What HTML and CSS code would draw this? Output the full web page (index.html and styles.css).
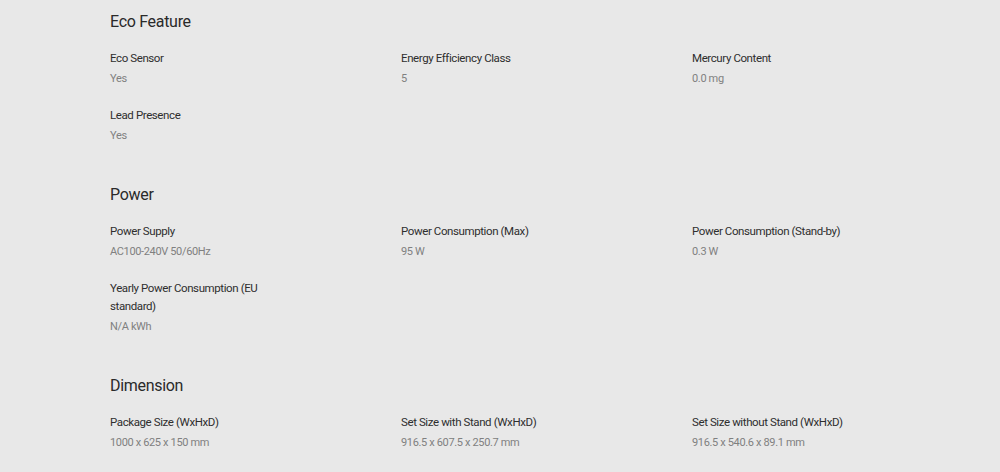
FILE: index.html
```html
<!DOCTYPE html>
<html lang="en">
<head>
<meta charset="utf-8">
<title>Specs</title>
<link rel="stylesheet" href="styles.css">
</head>
<body>
<main class="specs">
  <section class="group">
    <h2 class="group-title">Eco Feature</h2>
    <div class="grid">
      <div class="item"><div class="label">Eco Sensor</div><div class="value">Yes</div></div>
      <div class="item"><div class="label">Energy Efficiency Class</div><div class="value">5</div></div>
      <div class="item"><div class="label">Mercury Content</div><div class="value">0.0 mg</div></div>
      <div class="item"><div class="label">Lead Presence</div><div class="value">Yes</div></div>
    </div>
  </section>
  <section class="group">
    <h2 class="group-title">Power</h2>
    <div class="grid">
      <div class="item"><div class="label">Power Supply</div><div class="value">AC100-240V 50/60Hz</div></div>
      <div class="item"><div class="label">Power Consumption (Max)</div><div class="value">95 W</div></div>
      <div class="item"><div class="label">Power Consumption (Stand-by)</div><div class="value">0.3 W</div></div>
      <div class="item"><div class="label">Yearly Power Consumption (EU standard)</div><div class="value">N/A kWh</div></div>
    </div>
  </section>
  <section class="group">
    <h2 class="group-title">Dimension</h2>
    <div class="grid">
      <div class="item"><div class="label">Package Size (WxHxD)</div><div class="value">1000 x 625 x 150 mm</div></div>
      <div class="item"><div class="label">Set Size with Stand (WxHxD)</div><div class="value">916.5 x 607.5 x 250.7 mm</div></div>
      <div class="item"><div class="label">Set Size without Stand (WxHxD)</div><div class="value">916.5 x 540.6 x 89.1 mm</div></div>
    </div>
  </section>
</main>
</body>
</html>
```

FILE: styles.css
```css
html, body {
  margin: 0;
  padding: 0;
  background: #e8e8e8;
}
body {
  font-family: Roboto, "Open Sans", sans-serif;
  color: #333;
}
.specs {
  padding: 11px 17px 0 110px;
  display: flex;
  flex-direction: column;
  gap: 39px;
}
.group-title {
  margin: 0;
  font-size: 16px;
  font-weight: 400;
  line-height: 22px;
  letter-spacing: -0.3px;
  color: #2a2a2a;
}
.grid {
  margin-top: 16px;
  display: grid;
  grid-template-columns: repeat(3, 291px);
  row-gap: 18px;
}
.item {
  max-width: 175px;
}
.label {
  font-size: 11.5px;
  line-height: 18px;
  color: #2e2e2e;
  letter-spacing: -0.4px;
}
.value {
  margin-top: 3px;
  font-size: 11px;
  line-height: 18px;
  color: #808080;
  letter-spacing: -0.35px;
}
```
